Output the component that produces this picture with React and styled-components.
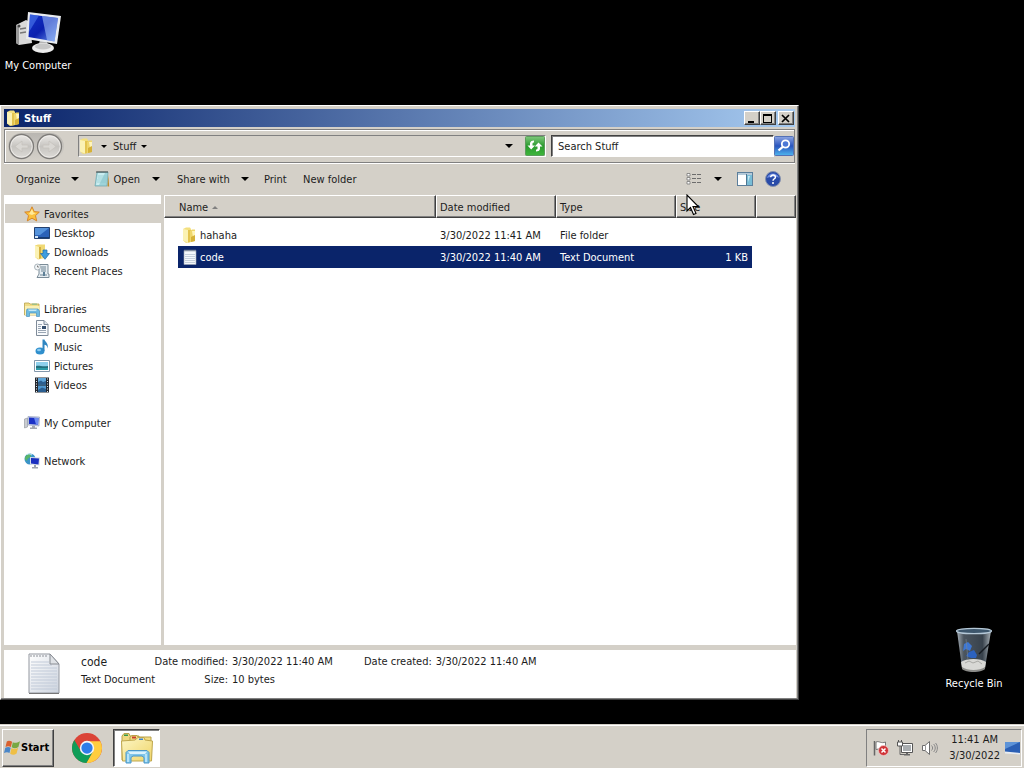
import React, { useState } from 'react'
import styled, { createGlobalStyle, css } from 'styled-components'

const face = '#d4d0c8'
const navy = '#0a246a'

const raised = css`
  border: 1px solid;
  border-color: #fff #404040 #404040 #fff;
  box-shadow: inset -1px -1px 0 #808080;
`

const sunken = css`
  border: 1px solid;
  border-color: #808080 #fff #fff #808080;
`

/* ---------- icons ---------- */

const ComputerIcon = ({ size = 16 }) => (
  <svg width={size} height={size} viewBox="0 0 48 48" aria-hidden="true">
    <defs>
      <linearGradient id="screen" x1="0" y1="0" x2="1" y2="1">
        <stop offset="0" stopColor="#1233c8" />
        <stop offset="0.5" stopColor="#0a1fae" />
        <stop offset="1" stopColor="#6f9cf0" />
      </linearGradient>
    </defs>
    <path d="M2 14 L12 9 L16 11 L18 32 L5 34 L2 32 Z" fill="#d9d9d9" />
    <path d="M2 14 L5 15 L5 34 L2 32 Z" fill="#9a9a9a" />
    <path d="M6 18 L12 17 M6 22 L12 21" stroke="#777" strokeWidth="1.4" />
    <circle cx="5" cy="15" r="1.5" fill="#444" />
    <path d="M26 29 L33 30 L34 37 L24 36 Z" fill="#b5b5b5" />
    <ellipse cx="29" cy="37" rx="11" ry="5" fill="#ececec" />
    <ellipse cx="29" cy="35.500" rx="8" ry="3" fill="#c6c6c6" />
    <path d="M14 1 L47 5 L43 33 L12 28 Z" fill="#e8ebef" />
    <path d="M16 3.500 L44 7 L40.500 30.500 L14.500 26 Z" fill="url(#screen)" />
    <path d="M28 5 L44 7 L40.500 30.500 L33 29 Z" fill="#9dbcf6" opacity="0.6" />
    <path d="M16 3.500 L25 4.600 L15 21 Z" fill="#4e7cec" opacity="0.6" />
  </svg>
)

const FolderIcon = ({ size = 16 }) => (
  <svg width={size} height={size} viewBox="0 0 16 16" aria-hidden="true">
    <path d="M1 2 L4 0.500 H8 L9 2 V15 L4 16 L1 13.500 Z" fill="#f3df7d" />
    <path d="M1 2 L6 3 V15.500 L1 13.500 Z" fill="#fbf2b4" />
    <path d="M6 3 H9 V15 L6 15.500 Z" fill="#e3c450" />
    <path d="M8 4 L10 2.500 H13 V14 L9 15 H8 Z" fill="#efd66c" />
    <path d="M10 4 H13 V9 L11 10 Z" fill="#fff5b9" />
    <path d="M9 10 L13 8 V14 L9 15 Z" fill="#d6b137" />
  </svg>
)

const TextIcon = () => (
  <svg width="16" height="16" viewBox="0 0 16 16" aria-hidden="true">
    <path d="M2 1.500 H14 V15.500 H2 Z" fill="#f4f7fb" stroke="#9aa5b4" strokeWidth="0.6" />
    <path d="M3 0.500 V2.500 M5 0.500 V2.500 M7 0.500 V2.500 M9 0.500 V2.500 M11 0.500 V2.500 M13 0.500 V2.500" stroke="#77808e" strokeWidth="1" />
    <path d="M3 5.500 H13 M3 7.500 H13 M3 9.500 H13 M3 11.500 H13 M3 13.500 H13" stroke="#b9c4d3" strokeWidth="0.8" />
  </svg>
)

const BigTextIcon = () => (
  <svg width="32" height="42" viewBox="0 0 32 42" aria-hidden="true">
    <defs>
      <linearGradient id="sheet" x1="0" y1="0" x2="1" y2="1">
        <stop offset="0" stopColor="#fff" />
        <stop offset="1" stopColor="#ccd3de" />
      </linearGradient>
    </defs>
    <path d="M1 1 H22 L31 11 V40 H1 Z" fill="url(#sheet)" stroke="#93979f" />
    <path d="M1 40.500 H31" stroke="#777" />
    <path d="M3 15 H29 M3 18 H29 M3 21 H29 M3 24 H29 M3 27 H29 M3 30 H29 M3 33 H29 M3 36 H29 M3 12 H24 M3 9 H21" stroke="#c2cbd9" />
    <path d="M22 1 V11 H31 Z" fill="#dfe2e6" stroke="#888c93" />
    <path d="M3 2 V4 M6 2 V4 M9 2 V4 M12 2 V4 M15 2 V4 M18 2 V4" stroke="#8c9097" />
  </svg>
)

const NotepadIcon = () => (
  <svg width="16" height="18" viewBox="0 0 16 18" aria-hidden="true">
    <path d="M3 2 H14 L13 16 H1 Z" fill="#9dd3d9" stroke="#6aa5ad" strokeWidth="0.7" />
    <path d="M4 3 L11 3 L5 15 H2 Z" fill="#c9edf0" />
    <path d="M4 6 H13 M4 8 H13 M3 10 H13 M3 12 H12" stroke="#8cc5cc" strokeWidth="0.7" />
    <path d="M3 1 V3 M5 1 V3 M7 1 V3 M9 1 V3 M11 1 V3 M13 1 V3" stroke="#333" strokeWidth="0.9" />
    <path d="M13.500 16.500 L14.300 5 L15.200 16.500 Z" fill="#b98c2e" />
  </svg>
)

const StarIcon = () => (
  <svg width="16" height="16" viewBox="0 0 16 16" aria-hidden="true">
    <path d="M8 0.800 L10.200 5.600 L15.300 6.100 L11.500 9.600 L12.700 14.900 L8 12.200 L3.300 14.900 L4.500 9.600 L0.700 6.100 L5.800 5.600 Z" fill="#fbc13c" stroke="#d47f22" strokeWidth="0.9" />
    <path d="M8 3 L9.500 6.700 L12 7 L8 9 L5 8 Z" fill="#ffe99a" />
  </svg>
)

const DesktopIcon = () => (
  <svg width="16" height="16" viewBox="0 0 16 16" aria-hidden="true">
    <path d="M0.500 2.500 H15.500 V13.500 H0.500 Z" fill="#2b62b8" stroke="#24416f" />
    <path d="M1 3 H15 L6 10 H1 Z" fill="#5593dc" />
    <path d="M1 12 H15 V13 H1 Z" fill="#173c74" />
    <path d="M1 11 H4 V13 H1 Z" fill="#cfe4f7" />
  </svg>
)

const DownloadIcon = () => (
  <svg width="16" height="16" viewBox="0 0 16 16" aria-hidden="true">
    <path d="M1 1.500 L4 0.500 H11 V14 L4 15.500 L1 13 Z" fill="#f0d975" />
    <path d="M1 1.500 L5 3 V15 L1 13 Z" fill="#fbf2b4" />
    <path d="M5 3 H7 V14 L5 15 Z" fill="#d5b040" />
    <path d="M9 6 H13 V9.500 H15.500 L11 15.300 L6.500 9.500 H9 Z" fill="#3d9de0" stroke="#1d67a8" strokeWidth="0.7" />
  </svg>
)

const RecentIcon = () => (
  <svg width="16" height="16" viewBox="0 0 16 16" aria-hidden="true">
    <path d="M5 1.500 H14 V11 H15 V14.500 H3 L5 11 Z" fill="#e6edf2" stroke="#7b8c98" />
    <path d="M7 4 H12 M7 6 H12 M7 8 H12 M6 12 H13" stroke="#6f8594" />
    <path d="M9 9 H11 V13 H9 Z" fill="#5d7f97" />
    <circle cx="3.500" cy="4" r="3" fill="#f3f6f8" stroke="#97a3ab" strokeWidth="0.8" />
    <path d="M3.500 2.500 V4 H5" stroke="#555" strokeWidth="0.7" fill="none" />
  </svg>
)

const LibraryIcon = () => (
  <svg width="16" height="16" viewBox="0 0 16 16" aria-hidden="true">
    <path d="M0.500 2 H5 L6 3 H15 V14 H0.500 Z" fill="#f0dc86" stroke="#b9a24c" strokeWidth="0.8" />
    <path d="M1 5 H15.500 L15 14 H1 Z" fill="#faf0b4" />
    <path d="M8 2.500 H13 V4 H8 Z" fill="#9fbf86" />
    <path d="M3 8 H14 L15.500 10 V15.500 H12.500 V12 H5.500 V15.500 H2.500 V10 Z" fill="#6ebbe0" stroke="#4a93c2" strokeWidth="0.7" />
    <path d="M4 8.500 H13 L12 10 H5 Z" fill="#c3e8f7" />
  </svg>
)

const ExplorerIcon = () => (
  <svg width="34" height="32" viewBox="0 0 34 32" aria-hidden="true">
    <defs>
      <linearGradient id="manila" x1="0" y1="0" x2="1" y2="1">
        <stop offset="0" stopColor="#fcf6c6" />
        <stop offset="1" stopColor="#f0d568" />
      </linearGradient>
    </defs>
    <path d="M2 28 V4 L4 1.500 H9 L10 4 H19 V28 Z" fill="#eed981" stroke="#b9a148" />
    <path d="M10 9 V5 L12 3.500 H17 L18 5 H31 V28 H10 Z" fill="#f2dd86" stroke="#b9a148" />
    <path d="M1.500 9 L15 8 L18 5.500 H24 L25 8 L32.500 9 L31.500 29 H2.500 Z" fill="url(#manila)" stroke="#bfa74e" />
    <path d="M4 2.500 H8 V4 H4 Z" fill="#35964a" />
    <path d="M12 4.500 H16 V6.500 H12 Z" fill="#c8402c" />
    <path d="M19 6.500 H23 V8 H19 Z" fill="#3d83cf" />
    <path d="M6 20.500 L8 18.500 H27 L29 20.500 V31 H24 V25.500 L22 24 H13 L11 25.500 V31 H6 Z" fill="#7fc6ea" stroke="#4b96c8" />
    <path d="M8 19.500 H27 L25 22 H10 Z" fill="#dcf3fd" />
    <path d="M7 22 H9 V30 H7 Z M25 22 H27 V30 H25 Z" fill="#b7e3f7" />
  </svg>
)

const DocumentIcon = () => (
  <svg width="16" height="16" viewBox="0 0 16 16" aria-hidden="true">
    <path d="M2.500 0.500 H10 L14 4.500 V15.500 H2.500 Z" fill="#f8fafc" stroke="#7f8b99" />
    <path d="M10 0.500 V4.500 H14" fill="#dce3ea" stroke="#7f8b99" />
    <path d="M4 4.500 H8 M4 6.500 H7 M4 8.500 H7 M4 10.500 H12 M4 12.500 H12" stroke="#9aa6b4" />
    <path d="M8 6 H12 V9 H8 Z" fill="#36506f" />
  </svg>
)

const MusicIcon = () => (
  <svg width="16" height="16" viewBox="0 0 16 16" aria-hidden="true">
    <ellipse cx="6" cy="12" rx="4.500" ry="3.500" fill="#2f8fcd" />
    <ellipse cx="5" cy="11" rx="2" ry="1.300" fill="#8bcbf0" />
    <path d="M8.500 0.500 H10.500 C11 3 15 4 13.500 9.500 C13 6.500 12 5.800 10.500 5.800 V12 H8.500 Z" fill="#2f86c2" />
  </svg>
)

const PictureIcon = () => (
  <svg width="16" height="16" viewBox="0 0 16 16" aria-hidden="true">
    <path d="M0.500 2.500 H15.500 V13.500 H0.500 Z" fill="#fff" stroke="#8297ab" />
    <path d="M2 4 H14 V12 H2 Z" fill="#8fd0ec" />
    <path d="M2 8 C5 7 8 9 14 8 V12 H2 Z" fill="#23707e" />
    <path d="M2 10 H14 V12 H2 Z" fill="#2c9aa6" />
  </svg>
)

const VideoIcon = () => (
  <svg width="16" height="16" viewBox="0 0 16 16" aria-hidden="true">
    <path d="M1 0.500 H15 V15.500 H1 Z" fill="#23282f" />
    <path d="M4 1 H12 V7.500 H4 Z" fill="#5fa6da" />
    <path d="M4 8.500 H12 V15 H4 Z" fill="#4f97cf" />
    <path d="M4 5 L7 3.500 L9 5 L12 4 V7.500 H4 Z M4 13 L8 10.500 L12 12 V15 H4 Z" fill="#2b5f91" />
    <path d="M2.500 1.500 V15 M13.500 1.500 V15" stroke="#e8edf2" strokeDasharray="1 1.500" />
  </svg>
)

const NetworkIcon = () => (
  <svg width="16" height="16" viewBox="0 0 16 16" aria-hidden="true">
    <circle cx="6" cy="6" r="5.500" fill="#3a94c8" />
    <path d="M2 3 C4 0 7 1 7 3 C6 5 3 5 3 8 C1 7 0 5 2 3 Z" fill="#59b56a" />
    <path d="M3 1.500 C5 0.500 6 1 8 2" stroke="#c4ecf8" fill="none" />
    <path d="M6 4 L16 4.500 L15.500 12.500 L6 11.500 Z" fill="#d6dce6" />
    <path d="M7 5 L15 5.500 L14.500 11.500 L7 10.500 Z" fill="#1a2fc0" />
    <path d="M10 12 H12 V14 H14 V15.500 H8 V14 H10 Z" fill="#9ca3ad" />
  </svg>
)

const SmallComputerIcon = () => (
  <svg width="16" height="16" viewBox="0 0 16 16" aria-hidden="true">
    <path d="M0.500 4 L3.500 3 V12 L0.500 13 Z" fill="#c9ccd1" stroke="#8d9299" strokeWidth="0.6" />
    <path d="M4 1.500 L15.500 2 L15 11 L4 10 Z" fill="#cdd4e6" stroke="#8c97b5" strokeWidth="0.6" />
    <path d="M5 2.500 L14.500 3 L14 9.800 L5 9 Z" fill="#1b31c6" />
    <path d="M10 2.800 L14.500 3 L14 9.800 L12 9.600 Z" fill="#6c8af0" />
    <path d="M8 11 H11 V12.500 H13 V14 H6 V12.500 H8 Z" fill="#a2a6ae" />
  </svg>
)

const NavCircle = ({ flip }) => (
  <svg width="27" height="27" viewBox="0 0 27 27" aria-hidden="true">
    <defs>
      <linearGradient id={flip ? 'discR' : 'discL'} x1="0" y1="0" x2="0" y2="1">
        <stop offset="0" stopColor="#eceae7" />
        <stop offset="0.5" stopColor="#c6c4c0" />
        <stop offset="1" stopColor="#dedcd8" />
      </linearGradient>
    </defs>
    <circle cx="13.500" cy="13.500" r="12" fill={`url(#${flip ? 'discR' : 'discL'})`} stroke="#7d7b78" strokeWidth="1.300" />
    <circle cx="13.500" cy="13.500" r="10.700" fill="none" stroke="#f2f0ed" strokeWidth="0.8" />
    <path
      d={flip ? 'M7 12 H13 V8 L20 13.500 L13 19 V15 H7 Z' : 'M20 12 H14 V8 L7 13.500 L14 19 V15 H20 Z'}
      fill="#d9d7d3"
      stroke="#c6c3be"
      strokeWidth="0.8"
    />
  </svg>
)

const RefreshIcon = () => (
  <svg width="20" height="20" viewBox="0 0 20 20" aria-hidden="true">
    <defs>
      <linearGradient id="green" x1="0" y1="0" x2="0" y2="1">
        <stop offset="0" stopColor="#7fc87c" />
        <stop offset="0.5" stopColor="#2a9a2e" />
        <stop offset="1" stopColor="#3fb63c" />
      </linearGradient>
    </defs>
    <rect x="0.500" y="0.500" width="19" height="19" rx="1" fill="url(#green)" stroke="#5c9c5c" />
    <path d="M2.500 9.500 H5 V7 C5.500 5.300 7 4.500 9 4.500 V6.500 C8 6.500 7.500 7 7.500 7.700 V9.500 H10 L6.200 13.500 Z" fill="#fff" />
    <path d="M9.700 10.500 L13.500 6.500 L17.500 10.500 H15 V13 C14.500 14.800 13 15.500 11 15.500 V13.500 C12.200 13.500 12.500 13.200 12.500 12.500 V10.500 Z" fill="#fff" />
  </svg>
)

const SearchIcon = () => (
  <svg width="20" height="20" viewBox="0 0 20 20" aria-hidden="true">
    <defs>
      <linearGradient id="blue" x1="0" y1="0" x2="0" y2="1">
        <stop offset="0" stopColor="#8da5e2" />
        <stop offset="0.5" stopColor="#2a55be" />
        <stop offset="1" stopColor="#4fb6ee" />
      </linearGradient>
    </defs>
    <rect x="0.500" y="0.500" width="19" height="19" rx="1" fill="url(#blue)" stroke="#5371b5" />
    <circle cx="11.500" cy="8" r="3.700" fill="#4c78d6" stroke="#fff" strokeWidth="1.800" />
    <path d="M8.700 10.800 L4.500 14.500" stroke="#fff" strokeWidth="2.300" />
  </svg>
)

const ViewIcon = () => (
  <svg width="16" height="14" viewBox="0 0 16 14" aria-hidden="true">
    <path d="M1 1.500 H4 V4 H1 Z M1 5.500 H4 V8 H1 Z M1 9.500 H4 V12 H1 Z" fill="#fff" stroke="#777" strokeWidth="0.8" />
    <path d="M6 2.500 H10 M11 2.500 H15 M6 6.500 H10 M11 6.500 H15 M6 10.500 H10 M11 10.500 H15" stroke="#6d6d6d" />
  </svg>
)

const PaneIcon = () => (
  <svg width="16" height="14" viewBox="0 0 16 14" aria-hidden="true">
    <rect x="0.500" y="0.500" width="15" height="13" fill="#fff" stroke="#5c7f9c" />
    <path d="M1 1 H15 V3 H1 Z" fill="#b5cad9" />
    <path d="M10 3 H15 V13 H10 Z" fill="#79bdd6" />
    <path d="M9.500 2 V13" stroke="#4f7691" />
    <path d="M11 4 H13 L11 10 Z" fill="#c7e8f3" />
  </svg>
)

const HelpIcon = () => (
  <svg width="16" height="16" viewBox="0 0 16 16" aria-hidden="true">
    <circle cx="8" cy="8" r="7.500" fill="#294ba8" stroke="#8591ad" />
    <path d="M2 7 C3 1 13 1 14 7 C11 5 5 6 2 7 Z" fill="#6d8be0" />
    <path d="M5.700 6.200 C5.700 3.200 10.700 3.400 10.400 6.300 C10.200 7.800 8 7.800 8 9.800" fill="none" stroke="#fff" strokeWidth="1.500" />
    <circle cx="8" cy="12" r="1" fill="#fff" />
  </svg>
)

const BinIcon = () => (
  <svg width="40" height="46" viewBox="0 0 40 46" aria-hidden="true">
    <defs>
      <linearGradient id="glass" x1="0" y1="0" x2="1" y2="0">
        <stop offset="0" stopColor="#a4adb5" />
        <stop offset="0.2" stopColor="#4b555f" />
        <stop offset="0.75" stopColor="#38424c" />
        <stop offset="1" stopColor="#a9b1b7" />
      </linearGradient>
    </defs>
    <path d="M3 4 L8 41 C12 46 28 46 31 41 L37 4 Z" fill="url(#glass)" />
    <ellipse cx="20" cy="4" rx="17.500" ry="2.700" fill="#3d566c" stroke="#b5c8d7" strokeWidth="1.300" />
    <path d="M7 35 C12 31 27 31 32 35 L31 41 C27 45 12 45 8 41 Z" fill="#d8d8d5" />
    <path d="M11 36 L15 34 L19 36 L24 34 L28 37" stroke="#a9a9a5" fill="none" />
    <path d="M8 40 C13 44 26 44 31 40 V42 C27 46 12 46 8 42 Z" fill="#8b8b88" />
    <path d="M10 17 L14 15 L18 19 L16 24 L12 22 L9 24 Z" fill="#3d76d2" />
    <path d="M15 25 L20 23 L23 28 L22 31 L17 31 L12 29 Z" fill="#2c62bf" />
    <path d="M35 17 L25 27" stroke="#151a20" strokeWidth="1.500" />
    <path d="M12 12 L14 33" stroke="#7c8892" opacity="0.6" />
  </svg>
)

const StartFlag = () => (
  <svg width="16" height="16" viewBox="0 0 16 16" aria-hidden="true">
    <path d="M2.800 1.500 C4.500 0.300 6.300 0.800 8.100 1.800 L6.900 7 C5 6 3.500 6 1.500 7 Z" fill="#d9602f" />
    <path d="M8.800 2.200 C11 3.200 12.800 2.800 16 1.200 L14.400 7 C12 8.500 10 8.500 7.700 7.300 Z" fill="#78a844" />
    <path d="M1.300 7.700 C3.500 6.700 5 6.700 6.700 7.700 L5.500 13 C4 12 2 12 0 13 Z" fill="#4a86c8" />
    <path d="M7.500 8 C9.500 9.200 11.500 9.200 14.100 7.700 L12.600 13.400 C10.500 15 8.500 15 6.200 13.700 Z" fill="#efbf45" />
  </svg>
)

const ChromeIcon = () => (
  <svg width="30" height="30" viewBox="0 0 48 48" aria-hidden="true">
    <circle cx="24" cy="24" r="24" fill="#db4437" />
    <path d="M24 13 H45.300 A24 24 0 0 1 23 48 L33.500 29.500 Z" fill="#ffcd40" />
    <path d="M33.500 29.500 L23 48 A24 24 0 0 1 3.700 11.200 L14.500 29.500 Z" fill="#0f9d58" />
    <circle cx="24" cy="24" r="11.500" fill="#f4f6f8" />
    <circle cx="24" cy="24" r="9" fill="#2f7de9" />
  </svg>
)

const FlagIcon = () => (
  <svg width="16" height="16" viewBox="0 0 16 16" aria-hidden="true">
    <path d="M1.500 1 V15.500" stroke="#666" strokeWidth="1.500" />
    <path d="M3 2 C6 0.500 8 4 12.500 2 V9 C9 11 6 8 3 9.500 Z" fill="#fff" stroke="#777" />
    <circle cx="10.500" cy="10.500" r="5" fill="#d03438" stroke="#f0c8c8" strokeWidth="0.8" />
    <path d="M8.500 8.500 L12.500 12.500 M12.500 8.500 L8.500 12.500" stroke="#fff" strokeWidth="1.500" />
  </svg>
)

const WiredIcon = () => (
  <svg width="16" height="16" viewBox="0 0 16 16" aria-hidden="true">
    <path d="M4.500 3.500 H15.500 V12.500 H4.500 Z" fill="#fff" stroke="#555" />
    <path d="M6 5 H14 V11 H6 Z" fill="#a9adb0" />
    <path d="M9 13 H11 V14 H13 V15.500 H7 V14 H9 Z" fill="#666" />
    <path d="M1.500 0 V2 M4.500 0 V2" stroke="#555" />
    <path d="M3 6 V14.500 H7" fill="none" stroke="#666" />
    <path d="M0.500 2 H5.500 V6 H0.500 Z" fill="#fff" stroke="#555" />
  </svg>
)

const SpeakerIcon = () => (
  <svg width="18" height="16" viewBox="0 0 18 16" aria-hidden="true">
    <path d="M1.500 5.500 H4 L8.500 1.500 V14.500 L4 10.500 H1.500 Z" fill="#fff" stroke="#6d6d6d" />
    <path d="M4.500 5.500 V10.500" stroke="#999" />
    <path d="M10.500 5.500 C12 7 12 9 10.500 10.500 M12.500 4 C14.800 6 14.800 10 12.500 12 M14.500 3 C17 5.500 17 10.500 14.500 13" fill="none" stroke="#888" />
  </svg>
)

const ShowDesktopIcon = () => (
  <svg width="16" height="16" viewBox="0 0 16 16" aria-hidden="true">
    <path d="M0 2 H15 V14 L0 12.500 Z" fill="#2b5fb4" />
    <path d="M0 2 H15 L0 9 Z" fill="#5d93d8" />
    <path d="M0 11.500 L15 13 V14.500 L0 13.500 Z" fill="#e9edf2" />
  </svg>
)

const Cursor = () => (
  <svg width="14" height="22" viewBox="0 0 14 22" aria-hidden="true">
    <path d="M1 1 V17 L4.500 13.500 L7.500 20.500 L10 19.500 L7 12.500 H12.300 Z" fill="#fff" stroke="#000" strokeWidth="1.100" />
  </svg>
)

const favorites = [
  ['Desktop', DesktopIcon],
  ['Downloads', DownloadIcon],
  ['Recent Places', RecentIcon],
]

const libraries = [
  ['Documents', DocumentIcon],
  ['Music', MusicIcon],
  ['Pictures', PictureIcon],
  ['Videos', VideoIcon],
]

const tree = [
  { name: 'Favorites', icon: StarIcon, items: favorites },
  { name: 'Libraries', icon: LibraryIcon, items: libraries },
  { name: 'My Computer', icon: SmallComputerIcon, items: [] },
  { name: 'Network', icon: NetworkIcon, items: [] },
]

const files = [
  { name: 'hahaha', modified: '3/30/2022 11:41 AM', type: 'File folder', size: '', icon: FolderIcon },
  { name: 'code', modified: '3/30/2022 11:40 AM', type: 'Text Document', size: '1 KB', icon: TextIcon },
]

const App = () => {
  const [selected, setSelected] = useState('code')
  const [place, setPlace] = useState('Favorites')

  return (
    <Screen>
      <GlobalStyle />
      <Desktop>
        <Shortcut>
          <ComputerIcon size={48} />
          My Computer
        </Shortcut>
        <Shortcut $corner>
          <BinIcon />
          Recycle Bin
        </Shortcut>

        <Window>
          <TitleBar>
            <FolderIcon />
            <Title>Stuff</Title>
            <CaptionButton aria-label="Minimize">
              <svg width="10" height="9"><path d="M1 7 H7 V9 H1 Z" /></svg>
            </CaptionButton>
            <CaptionButton aria-label="Maximize">
              <svg width="10" height="9"><path d="M0 0 H9 V9 H0 Z M1 2 V8 H8 V2 Z" fillRule="evenodd" /></svg>
            </CaptionButton>
            <CaptionButton $apart aria-label="Close">
              <svg width="10" height="9"><path d="M1 1 L8 8 M8 1 L1 8" stroke="#000" strokeWidth="1.700" /></svg>
            </CaptionButton>
          </TitleBar>

          <NavStrip>
            <History>
              <Round aria-label="Back"><NavCircle /></Round>
              <Round aria-label="Forward"><NavCircle flip /></Round>
            </History>
            <Address>
              <FolderIcon />
              <Crumb aria-label="Root"><Arrow $small /></Crumb>
              <Crumb>Stuff <Arrow $small /></Crumb>
              <Fill />
              <Crumb $wide aria-label="Previous locations"><Arrow /></Crumb>
              <SquareButton aria-label="Refresh"><RefreshIcon /></SquareButton>
            </Address>
            <SearchBox>
              <SearchInput aria-label="Search Stuff" placeholder="Search Stuff" />
              <SquareButton aria-label="Search"><SearchIcon /></SquareButton>
            </SearchBox>
          </NavStrip>

          <Toolbar>
            <Tool $width={78}>Organize <Arrow /></Tool>
            <Tool $width={58} $icon><NotepadIcon />Open</Tool>
            <Tool $width={25} aria-label="Open with"><Arrow /></Tool>
            <Tool $width={87}>Share with <Arrow /></Tool>
            <Tool $width={39}>Print</Tool>
            <Tool $width={68}>New folder</Tool>
            <Fill />
            <Tool $width={28} aria-label="Change view"><ViewIcon /></Tool>
            <Tool $width={23} aria-label="More views"><Arrow /></Tool>
            <Tool $width={28} aria-label="Preview pane"><PaneIcon /></Tool>
            <Tool $width={28} aria-label="Help"><HelpIcon /></Tool>
          </Toolbar>

          <Panes>
            <Sidebar>
              {tree.map(group => (
                <Group key={group.name}>
                  <Place
                    href={'#' + group.name}
                    $active={place === group.name}
                    onClick={() => setPlace(group.name)}
                  >
                    <group.icon />{group.name}
                  </Place>
                  {group.items.map(([name, Icon]) => (
                    <Place key={name} href={'#' + name} $nested $active={place === name} onClick={() => setPlace(name)}>
                      <Icon />{name}
                    </Place>
                  ))}
                </Group>
              ))}
            </Sidebar>
            <List>
              <Table>
                <colgroup>
                  <Col />
                  <Col $width={120} />
                  <Col $width={120} />
                  <Col $width={80} />
                  <Col $width={40} />
                </colgroup>
                <thead>
                  <tr>
                    <Th $first>Name <SortMark /></Th>
                    <Th>Date modified</Th>
                    <Th>Type</Th>
                    <Th>Size</Th>
                    <Th />
                  </tr>
                </thead>
                <Rows>
                  {files.map(file => (
                    <Row key={file.name} $selected={selected === file.name} onClick={() => setSelected(file.name)}>
                      <NameCell><Cell><file.icon />{file.name}</Cell></NameCell>
                      <td><Cell>{file.modified}</Cell></td>
                      <td><Cell>{file.type}</Cell></td>
                      <SizeCell><Cell $right>{file.size}</Cell></SizeCell>
                      <td />
                    </Row>
                  ))}
                </Rows>
              </Table>
            </List>
          </Panes>

          <Details>
            <BigTextIcon />
            <Facts>
              <FileName>code</FileName>
              <Label>Date modified:</Label>
              <span>3/30/2022 11:40 AM</span>
              <Label>Date created:</Label>
              <span>3/30/2022 11:40 AM</span>
              <span>Text Document</span>
              <Label>Size:</Label>
              <span>10 bytes</span>
            </Facts>
          </Details>
        </Window>
        <Pointer><Cursor /></Pointer>
      </Desktop>

      <Taskbar>
        <StartButton><StartFlag />Start</StartButton>
        <Launcher aria-label="Google Chrome"><ChromeIcon /></Launcher>
        <Launcher $open aria-label="Windows Explorer"><ExplorerIcon /></Launcher>
        <Fill />
        <Tray>
          <FlagIcon />
          <WiredIcon />
          <SpeakerIcon />
          <Clock>
            <span>11:41 AM</span>
            <span>3/30/2022</span>
          </Clock>
          <ShowDesktopIcon />
        </Tray>
      </Taskbar>
    </Screen>
  )
}

const GlobalStyle = createGlobalStyle`
  body {
    margin: 0;
    background: #000;
  }
  * {
    box-sizing: border-box;
  }
  body, button, input {
    font-family: 'DejaVu Sans Condensed', 'DejaVu Sans', sans-serif;
    font-size: 11px;
    color: #1c1c1c;
  }
  button {
    padding: 0;
    border: 0;
    background: none;
  }
  svg {
    display: block;
    flex-shrink: 0;
  }
`

const Screen = styled.div`
  display: flex;
  flex-direction: column;
  height: 100vh;
  overflow: hidden;
`

const Desktop = styled.main`
  position: relative;
  flex: 1;
`

const Shortcut = styled.button`
  position: absolute;
  ${props => props.$corner ? 'right: 12px; bottom: 34px;' : 'left: 0; top: 11px;'}
  width: 76px;
  display: flex;
  flex-direction: column;
  align-items: center;
  gap: ${props => props.$corner ? '4px' : '0'};
  color: #fff;
  white-space: nowrap;
`

const Window = styled.section`
  position: absolute;
  top: 105px;
  left: 0;
  right: 225px;
  bottom: 24px;
  display: flex;
  flex-direction: column;
  padding: 3px 2px 1px 3px;
  background: ${face};
  ${raised}
`

const TitleBar = styled.header`
  display: flex;
  align-items: center;
  height: 18px;
  margin-right: 1px;
  padding: 0 1px 0 2px;
  background: linear-gradient(to right, ${navy}, #a6caf0);
`

const Title = styled.h1`
  flex: 1;
  margin: 0 0 0 2px;
  font-size: 11px;
  color: #fff;
`

const CaptionButton = styled.button`
  display: flex;
  align-items: center;
  justify-content: center;
  width: 16px;
  height: 14px;
  margin-left: ${props => props.$apart ? '2px' : '0'};
  background: ${face};
  ${raised}
`

const NavStrip = styled.div`
  display: flex;
  align-items: center;
  height: 34px;
  margin: 2px 1px 0 0;
  padding-left: 3px;
  border: 1px solid #808080;
  box-shadow: inset 1px 1px 0 #fff, 0 1px 0 #fff;
`

const History = styled.div`
  display: flex;
  border-radius: 14px;
  background: linear-gradient(#b9b6b1, #c9c6c0 60%, ${face});
`

const Round = styled.button`
  width: 28px;
  height: 27px;
`

const Address = styled.div`
  display: flex;
  align-items: center;
  flex: 2 1 0;
  height: 22px;
  margin-left: 14px;
  ${sunken}
`

const Crumb = styled.button`
  display: flex;
  align-items: center;
  gap: 5px;
  padding: ${props => props.$wide ? '0 12px' : '0 0 0 6px'};
`

const Arrow = styled.span`
  width: 0;
  border: ${props => props.$small ? '3px' : '4px'} solid transparent;
  border-top-color: #000;
  border-bottom: 0;
`

const Fill = styled.div`
  flex: 1;
`

const SquareButton = styled.button`
  width: 20px;
  height: 20px;
`

const SearchBox = styled.div`
  display: flex;
  align-items: center;
  flex: 1 1 10px;
  margin-left: 5px;
`

const SearchInput = styled.input`
  flex: 1;
  min-width: 0;
  height: 22px;
  padding: 0 6px;
  border: 1px solid;
  border-color: #404040 #fff #fff #404040;
  box-shadow: inset 1px 1px 0 #808080;
  background: #fff;
  outline: 0;

  &::placeholder {
    color: #1c1c1c;
    opacity: 1;
  }
`

const Toolbar = styled.div`
  display: flex;
  align-items: center;
  height: 32px;
  padding: 0 11px 0 4px;
`

const Tool = styled.button`
  display: flex;
  align-items: center;
  justify-content: space-between;
  width: ${props => props.$width}px;
  height: 24px;
  padding: ${props => props.$icon ? '0 4px 0 8px' : '0 7px 0 8px'};
  white-space: nowrap;
`

const Panes = styled.div`
  display: flex;
  flex: 1;
  min-height: 0;
`

const Sidebar = styled.nav`
  width: 157px;
  padding: 9px 0 0 1px;
  background: #fff;
`

const Group = styled.div`
  margin-bottom: 19px;
`

const Place = styled.a`
  display: flex;
  align-items: center;
  gap: 4px;
  height: 19px;
  padding: ${props => props.$nested ? '1px 0 0 29px' : '1px 0 0 19px'};
  color: #1c1c1c;
  text-decoration: none;
  background: ${props => props.$active ? face : 'transparent'};
`

const List = styled.div`
  flex: 1;
  margin-left: 3px;
  background: #fff;
`

const Table = styled.table`
  width: 100%;
  table-layout: fixed;
  border-collapse: separate;
  border-spacing: 0;

  td {
    padding: 0;
  }
`

const Col = styled.col`
  width: ${props => props.$width ? props.$width + 'px' : 'auto'};
`

const Th = styled.th`
  height: 23px;
  padding: ${props => props.$first ? '1px 0 0 14px' : '1px 0 0 3px'};
  font-weight: normal;
  text-align: left;
  background: ${face};
  ${raised}
`

const SortMark = styled.span`
  display: inline-block;
  margin-left: 1px;
  vertical-align: middle;
  border: 3px solid transparent;
  border-bottom-color: #808080;
  border-top: 0;
`

const Rows = styled.tbody`
  &::before {
    content: '';
    display: block;
    height: 6px;
  }
`

const Cell = styled.div`
  display: flex;
  align-items: center;
  justify-content: ${props => props.$right ? 'flex-end' : 'flex-start'};
  gap: 2px;
  height: 22px;
  padding: 0 4px;
  white-space: nowrap;
`

const Row = styled.tr`
  ${Cell} {
    color: ${props => props.$selected ? '#fff' : '#1c1c1c'};
    background: ${props => props.$selected ? navy : 'transparent'};
  }
`

const NameCell = styled.td`
  && {
    padding-left: 14px;
  }
`

const SizeCell = styled.td`
  && {
    padding-right: 4px;
  }
`

const Details = styled.footer`
  display: flex;
  align-items: flex-start;
  gap: 21px;
  height: 48px;
  margin-top: 5px;
  padding: 3px 0 0 24px;
  background: #fff;
`

const Facts = styled.div`
  display: grid;
  grid-template-columns: 70px 73px 128px auto auto;
  grid-auto-rows: 18px;
  column-gap: 4px;
  justify-content: start;
  line-height: 18px;
  white-space: nowrap;
`

const FileName = styled.span`
  font-size: 12px;
`

const Label = styled.span`
  display: flex;
  justify-content: flex-end;
`

const Pointer = styled.div`
  position: absolute;
  left: 686px;
  top: 194px;
  pointer-events: none;
`

const Taskbar = styled.footer`
  display: flex;
  align-items: center;
  height: 44px;
  padding: 2px 2px 0;
  background: ${face};
  border-top: 1px solid ${face};
  box-shadow: inset 0 1px 0 #fff;
`

const StartButton = styled.button`
  display: flex;
  align-items: center;
  gap: 1px;
  width: 52px;
  height: 38px;
  padding-left: 1px;
  font-weight: bold;
  color: #000;
  ${raised}
`

const Launcher = styled.button`
  display: flex;
  align-items: center;
  justify-content: center;
  width: 47px;
  height: 38px;
  margin-left: ${props => props.$open ? '3px' : '9px'};
  ${props => props.$open && css`
    background: #fff;
    border: 1px solid;
    border-color: #404040 #fff #fff #404040;
    box-shadow: inset 1px 1px 0 #808080;
  `}
`

const Tray = styled.div`
  display: flex;
  align-items: center;
  gap: 8px;
  height: 38px;
  padding-left: 6px;
  ${sunken}
`

const Clock = styled.time`
  display: flex;
  flex-direction: column;
  align-items: center;
  margin: 0 -3px 0 2px;
  line-height: 16px;
`

export default App
